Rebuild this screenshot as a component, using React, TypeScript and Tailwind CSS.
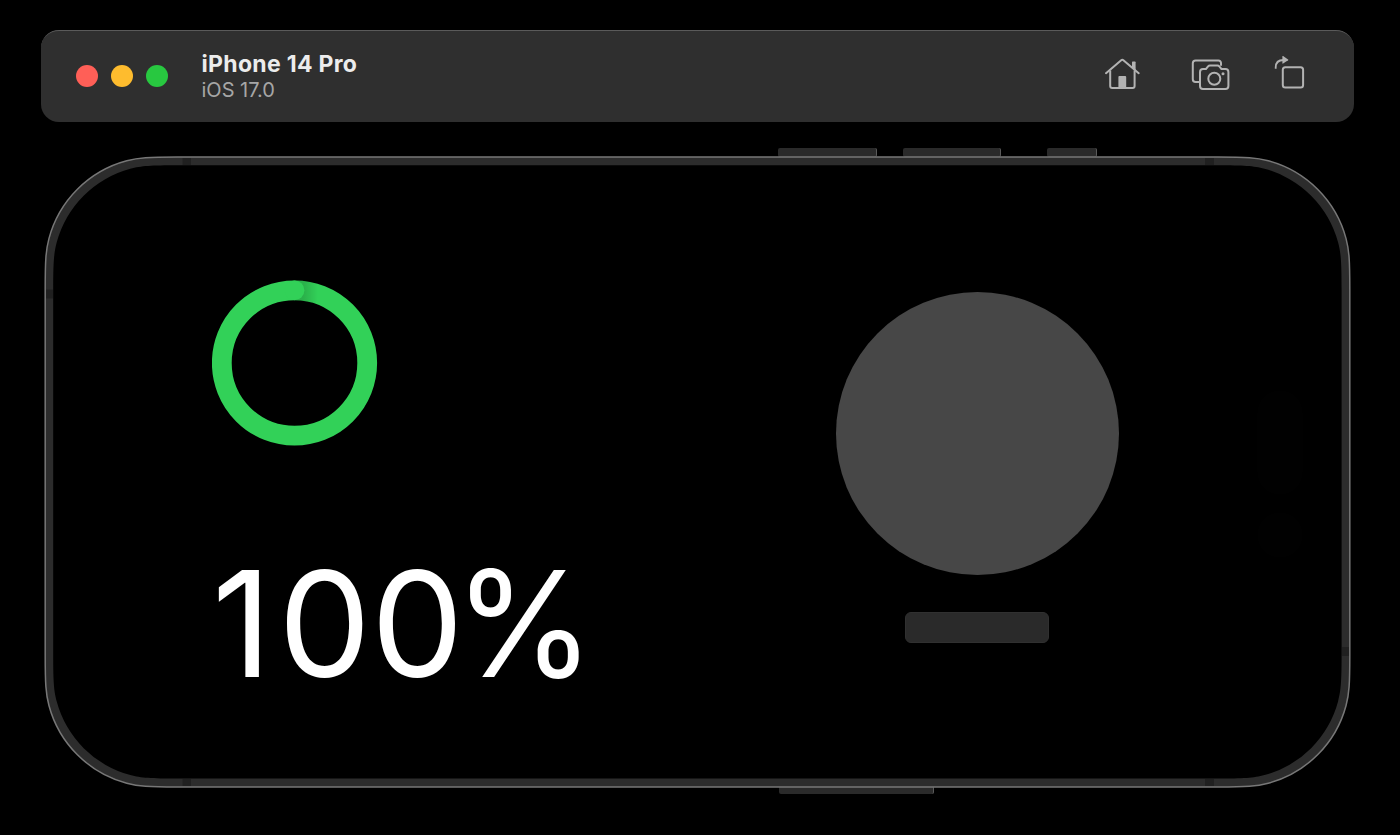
import type { ReactNode } from "react";

const BUTTONS = [
  { id: "volume-up", className: "left-[734px] top-[-8px] h-[9px] w-[99px]" },
  { id: "volume-down", className: "left-[859px] top-[-8px] h-[9px] w-[98px]" },
  { id: "action", className: "left-[1003px] top-[-8px] h-[9px] w-[50px]" },
  { id: "power", className: "left-[735px] bottom-[-6px] h-2 w-[155px]" },
];

const ANTENNAS = [
  { x: 138.5, y: 2, w: 8.5, h: 7 },
  { x: 1161, y: 2, w: 9, h: 7 },
  { x: 138.5, y: 623, w: 8.5, h: 7 },
  { x: 1161, y: 623, w: 9, h: 7 },
  { x: 2, y: 133.5, w: 7, h: 9 },
  { x: 1298, y: 491, w: 7, h: 9 },
];

// Rounded rect whose arcs ease into the straight edges.
const continuousRect = (x: number, y: number, w: number, h: number, r: number) => {
  const corner = (right: boolean, bottom: boolean) => {
    const at = (a: number, b: number) => `${right ? x + w - a * r : x + a * r} ${bottom ? y + h - b * r : y + b * r}`;
    const ease = [at(1.2, 0), at(0.9385, 0), at(0.8477, 0.0055), at(0.7413, 0.034)];
    const side = [at(0.034, 0.7413), at(0.0055, 0.8477), at(0, 0.9385), at(0, 1.2)];
    // top-left and bottom-right run from the horizontal edge to the vertical one
    const [a, b] = right === bottom ? [ease, side] : [[...side].reverse(), [...ease].reverse()];
    return `${a[0]} C${a.slice(1).join(" ")} A${r} ${r} 0 0 0 ${b[0]} C${b.slice(1).join(" ")}`;
  };

  // walk the corners counter-clockwise, starting on the top edge
  const topLeft = corner(false, false);
  const bottomLeft = corner(false, true);
  const bottomRight = corner(true, true);
  const topRight = corner(true, false);
  return `M${topLeft} L${bottomLeft} L${bottomRight} L${topRight} Z`;
};

const ToolbarButton = ({ label, children }: { label: string; children: ReactNode }) => (
  <button type="button" aria-label={label} className="block text-[#b3b3b3]">
    {children}
  </button>
);

const HomeIcon = () => (
  <svg width="36" height="38" viewBox="0 0 36 38" fill="none" stroke="currentColor" strokeWidth="2" className="block">
    <path d="M2 19.2 17.2 6.2a1.7 1.7 0 0 1 2.2 0L34.7 19.2" strokeLinecap="round" />
    <path d="M6.2 16.5v15.6a2 2 0 0 0 2 2h20.4a2 2 0 0 0 2-2V16.5" />
    <path d="M28 12.5V8.2q0-.7.7-.7h2.2q.7 0 .7.7v8.5z" fill="currentColor" stroke="none" />
    <path d="M14.4 34.5V23q0-1 1-1h5.8q1 0 1 1v11.5z" fill="currentColor" stroke="none" />
  </svg>
);

const ScreenshotIcon = () => (
  <svg width="42" height="38" viewBox="0 0 42 38" fill="none" stroke="currentColor" strokeWidth="2" className="block">
    <path d="M31 11.8V9a2.5 2.5 0 0 0-2.5-2.5H5.6A2.8 2.8 0 0 0 2.8 9.3V25.2A2.8 2.8 0 0 0 5.6 28H9" />
    <path d="M13 14.9h3l2.1-2.5q.7-.8 1.8-.8h7.6q1.1 0 1.8.8l2.1 2.5h4q3 0 3 3v14q0 3-3 3H13q-3 0-3-3v-14q0-3 3-3z" />
    <circle cx="24.3" cy="24.7" r="6" />
    <circle cx="33" cy="19.7" r="1.5" fill="currentColor" stroke="none" />
  </svg>
);

const RotateIcon = () => (
  <svg width="32" height="38" viewBox="0 0 32 38" fill="none" stroke="currentColor" strokeWidth="2" className="block">
    <rect x="9.8" y="13.3" width="20.3" height="20.2" rx="2.5" />
    <path d="M2.7 14.8V13.5Q2.7 6 10.5 6" strokeWidth="1.8" />
    <path d="M9.4 2.4v6.9q0 .7.7.3l5-3.4q.5-.4 0-.8l-5-3.4q-.7-.3-.7.4z" fill="currentColor" stroke="none" />
  </svg>
);

const ProgressRing = () => (
  <svg width="166" height="166" viewBox="0 0 166 166" className="block">
    <defs>
      <linearGradient id="cap-shadow" x1="91" x2="106" y1="0" y2="0" gradientUnits="userSpaceOnUse">
        <stop offset="0" stopColor="#000" stopOpacity="0.16" />
        <stop offset="1" stopColor="#000" stopOpacity="0" />
      </linearGradient>
    </defs>
    <circle cx="82.5" cy="83" r="72.7" fill="none" stroke="#32d158" strokeWidth="19.8" />
    <path d="M82.5 10.3A72.7 72.7 0 0 1 107 14.5" fill="none" stroke="url(#cap-shadow)" strokeWidth="19.8" />
    <circle cx="82.5" cy="10.3" r="9.9" fill="#32d158" />
  </svg>
);

const DeviceFrame = () => (
  <svg width="1307" height="632" viewBox="0 0 1307 632" className="absolute inset-0">
    <path d={continuousRect(1.2, 1.1, 1304.6, 629.9, 110)} fill="#2c2c2c" stroke="#777" strokeWidth="1.5" />
    {ANTENNAS.map((a) => (
      <rect key={`${a.x}-${a.y}`} x={a.x} y={a.y} width={a.w} height={a.h} fill="#202020" />
    ))}
    <path d={continuousRect(9.2, 9.2, 1288.4, 613.4, 104)} fill="#000" />
  </svg>
);

const TitleBar = () => (
  <header className="mx-auto flex h-[92px] w-[1313px] items-center rounded-[18px] border-t border-[#5a5a5a] bg-[#2f2f2f] pr-[49px] pl-[35px]">
    <div className="-mt-px flex gap-[13.5px]">
      <span className="size-[21.5px] rounded-full bg-[#ff5f57]" />
      <span className="size-[21.5px] rounded-full bg-[#febc2e]" />
      <span className="size-[21.5px] rounded-full bg-[#28c840]" />
    </div>
    <div className="ml-[34px] flex-1">
      <h1 className="text-[23px] leading-[27px] font-bold tracking-[0.31px] text-[#ececec]">iPhone 14 Pro</h1>
      <p className="text-[20px] leading-[25px] text-[#a6a6a6]">iOS 17.0</p>
    </div>
    <div className="mb-[7px] flex items-center">
      <ToolbarButton label="Home">
        <HomeIcon />
      </ToolbarButton>
      <div className="mr-[41px] ml-[50px]">
        <ToolbarButton label="Screenshot">
          <ScreenshotIcon />
        </ToolbarButton>
      </div>
      <ToolbarButton label="Rotate">
        <RotateIcon />
      </ToolbarButton>
    </div>
  </header>
);

const Device = () => (
  <main className="relative mx-auto mt-[34px] h-[632px] w-[1307px]">
    {BUTTONS.map((button) => (
      <span
        key={button.id}
        className={`absolute rounded-[2px] border-r border-[#5a5a5a] bg-[#2a2a2a] ${button.className}`}
      />
    ))}
    <DeviceFrame />
    <div className="relative flex h-full pl-[168px]">
      <section className="w-[624px] pt-[124px]">
        <ProgressRing />
        <p className="mt-[89px] text-[147px] leading-[178px] text-white">
          <span className="tracking-[6.5px]">1</span>
          <span>0</span>
          <span className="tracking-[-9.5px]">0</span>
          <span className="inline-block origin-left scale-x-[0.975]">%</span>
        </p>
      </section>
      <section className="flex w-[283px] flex-col items-center pt-[136px]">
        <div className="size-[283px] rounded-full bg-[#474747]" />
        <div className="mt-[37px] mr-px h-[31px] w-[144px] rounded-[6px] border border-[#303030] bg-[#2a2a2a]" />
      </section>
      <div className="ml-[138px] flex flex-col gap-[17px] pt-[234px]">
        <div className="h-[105px] w-[46px] rounded-full bg-[#010101]" />
        <div className="size-[46px] rounded-full bg-[#010101]" />
      </div>
    </div>
  </main>
);

const App = () => (
  <div className="h-[835px] w-[1400px] overflow-hidden bg-black pt-[30px] pr-[5px] font-['Inter',sans-serif]">
    <TitleBar />
    <Device />
  </div>
);

export default App;
